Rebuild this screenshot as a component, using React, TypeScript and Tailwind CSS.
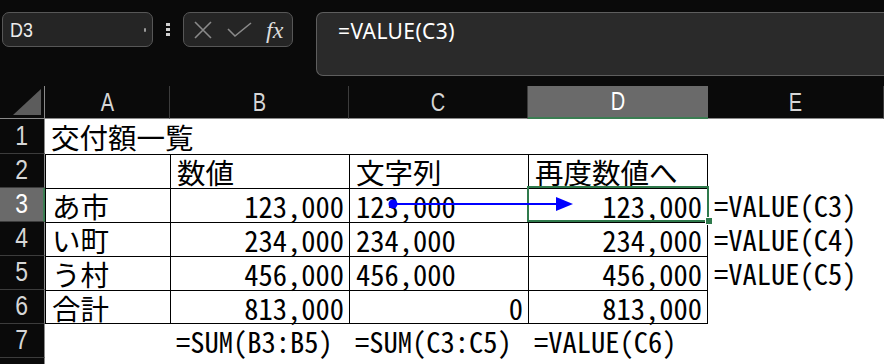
import React from 'react'

const cellFont = {
  fontFamily: '"Noto Sans Mono CJK JP", "Noto Sans CJK JP", monospace',
}

type Cell = { text?: string; align?: 'left' | 'right' }

const rows: Cell[][] = [
  [{ text: '交付額一覧' }, {}, {}, {}, {}],
  [{}, { text: '数値' }, { text: '文字列' }, { text: '再度数値へ' }, {}],
  [{ text: 'あ市' }, { text: '123,000', align: 'right' }, { text: '123,000' }, { text: '123,000', align: 'right' }, { text: '=VALUE(C3)' }],
  [{ text: 'い町' }, { text: '234,000', align: 'right' }, { text: '234,000' }, { text: '234,000', align: 'right' }, { text: '=VALUE(C4)' }],
  [{ text: 'う村' }, { text: '456,000', align: 'right' }, { text: '456,000' }, { text: '456,000', align: 'right' }, { text: '=VALUE(C5)' }],
  [{ text: '合計' }, { text: '813,000', align: 'right' }, { text: '0', align: 'right' }, { text: '813,000', align: 'right' }, {}],
  [{}, { text: '=SUM(B3:B5)' }, { text: '=SUM(C3:C5)' }, { text: '=VALUE(C6)' }, {}],
  [{}, {}, {}, {}, {}],
]

const columns = ['A', 'B', 'C', 'D', 'E']

function FormulaToolbar() {
  return (
    <div className="h-[86px] bg-[#0a0a0a] flex items-start pt-[12px]">
      {/* name box */}
      <div className="ml-[2px] w-[151px] h-[35px] rounded-[7px] border border-[#575757] bg-[#252525] flex items-center justify-between pl-[7px] pr-[6px]">
        <span className="text-[21px] text-[#ececec] leading-none" style={{ fontFamily: '"Liberation Sans", sans-serif', transform: 'scaleX(0.85)', transformOrigin: 'left' }}>
          D3
        </span>
        <span className="w-[2px] h-[4px] bg-[#9a9a9a] rounded-sm" />
      </div>

      {/* drag dots */}
      <div className="w-[30px] h-[35px] flex flex-col items-center justify-center gap-[2px]">
        <span className="w-[4px] h-[3px] bg-[#d0d0d0]" />
        <span className="w-[4px] h-[3px] bg-[#d0d0d0]" />
        <span className="w-[4px] h-[3px] bg-[#d0d0d0]" />
      </div>

      {/* cancel / enter / fx */}
      <div className="w-[110px] h-[35px] rounded-[7px] border border-[#575757] bg-[#252525] flex items-center pl-[9px] gap-[14px]">
        <svg width="20" height="18" viewBox="0 0 20 18" fill="none">
          <path d="M2 1 L18 17 M18 1 L2 17" stroke="#8a8a8a" strokeWidth="1.6" />
        </svg>
        <svg width="25" height="16" viewBox="0 0 25 16" fill="none">
          <path d="M1 7 L8 14 L24 1" stroke="#8a8a8a" strokeWidth="1.6" />
        </svg>
        <span className="text-[24px] italic text-[#dcdcdc] leading-none" style={{ fontFamily: '"Liberation Serif", serif' }}>
          fx
        </span>
      </div>

      {/* formula bar */}
      <div className="ml-[23px] flex-1 h-[64px] rounded-l-[7px] border border-r-0 border-[#5e5e5e] bg-[#2a2a2a] pl-[21px] pt-[3px]">
        <span className="text-[21px] text-white tracking-[0.4px]" style={{ fontFamily: '"Noto Sans", sans-serif' }}>
          =VALUE(C3)
        </span>
      </div>
    </div>
  )
}

export default function App() {
  return (
    <div className="w-[884px] h-[364px] overflow-hidden bg-white">
      <FormulaToolbar />

      <div className="relative grid grid-cols-[45px_125px_179px_179px_180px_1fr] auto-rows-[34px]">
        {/* column headers */}
        <div className="h-[33px] bg-[#0a0a0a] border-b border-r border-[#8a8a8a] flex items-end justify-end pr-[3px] pb-[3px]">
          <svg width="28" height="26" viewBox="0 0 28 26">
            <polygon points="28,0 28,26 0,26" fill="#5c5c5c" />
          </svg>
        </div>
        {columns.map((c) => (
          <div
            key={c}
            className={`h-[33px] flex items-center justify-center text-[25px] leading-none ${
              c === 'D'
                ? 'bg-[#6a6a6a] text-white border-b-2 border-[#3b7d52]'
                : 'bg-[#0a0a0a] text-[#d6d6d6] border-b border-r border-b-[#8a8a8a] border-r-[#3c3c3c]'
            }`}
            style={{ fontFamily: '"Liberation Sans", sans-serif' }}
          >
            <span className="inline-block scale-x-[0.8]">{c}</span>
          </div>
        ))}

        {rows.map((row, r) => {
          const rowNo = r + 1
          const inTable = rowNo >= 2 && rowNo <= 6
          return (
            <React.Fragment key={rowNo}>
              <div
                className={`flex items-center justify-center text-[27px] leading-none border-b ${
                  rowNo === 3
                    ? 'bg-[#6a6a6a] text-white border-r-2 border-r-[#3b7d52] border-b-[#3c3c3c]'
                    : 'bg-[#0a0a0a] text-[#d6d6d6] border-r border-r-[#8a8a8a] border-b-[#3c3c3c]'
                } ${r === 0 ? '-mt-[1px] h-[35px]' : ''}`}
                style={{ fontFamily: '"Liberation Sans", sans-serif' }}
              >
                {rowNo <= 7 && <span className="inline-block scale-x-[0.85]">{rowNo}</span>}
              </div>
              {row.map((cell, c) => {
                const tableCol = c <= 3
                const bordered = inTable && tableCol
                return (
                  <div
                    key={c}
                    className={`whitespace-nowrap text-[28.5px] text-black ${
                      bordered ? 'border-t border-l border-black' : ''
                    } ${bordered && c === 3 ? 'border-r' : ''} ${bordered && rowNo === 6 ? 'border-b' : ''} ${
                      cell.align === 'right' ? 'text-right pr-[5px]' : 'pl-[6px]'
                    } ${rowNo === 1 && c === 0 ? 'relative z-10' : ''}`}
                    style={cellFont}
                  >
                    {cell.text && <span className="block h-[32px] leading-[34px]">{cell.text}</span>}
                  </div>
                )
              })}
            </React.Fragment>
          )
        })}

        {/* active cell D3 */}
        <div className="absolute left-[527px] top-[100px] w-[182px] h-[36px] border-2 border-[#2f7a4c] pointer-events-none" />
        <div className="absolute left-[705px] top-[131px] w-[8px] h-[8px] bg-[#2f7a4c] border border-white pointer-events-none" />

        {/* trace precedents arrow C3 -> D3 */}
        <svg className="absolute left-0 top-0 pointer-events-none" width="884" height="278">
          <line x1="393" y1="118" x2="560" y2="118" stroke="#0000ff" strokeWidth="2" />
          <circle cx="393" cy="118" r="4.5" fill="#0000ff" />
          <polygon points="556,111 573,118 556,125" fill="#0000ff" />
        </svg>
      </div>
    </div>
  )
}
